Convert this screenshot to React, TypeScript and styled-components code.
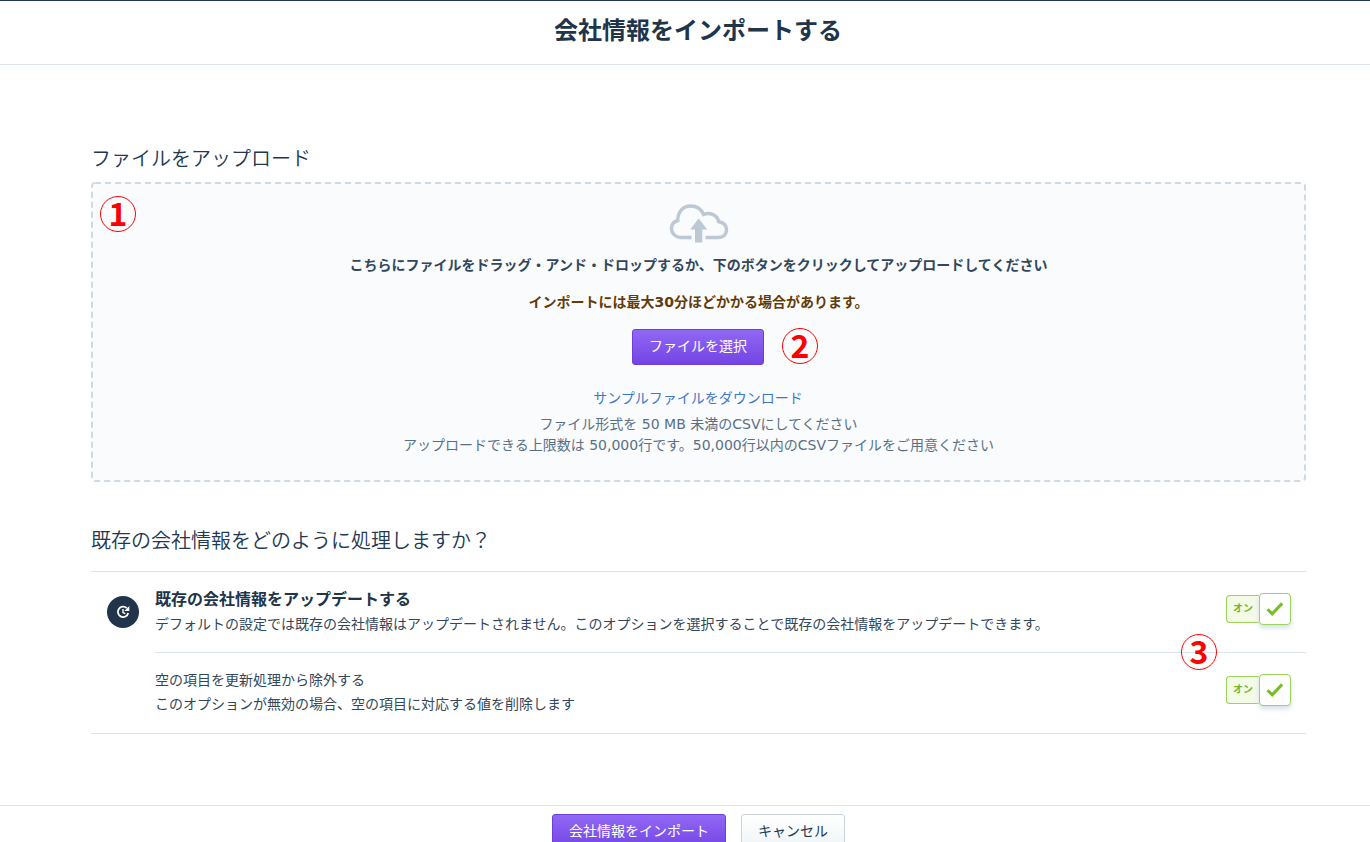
import React from "react";
import styled, { createGlobalStyle } from "styled-components";

const GlobalStyle = createGlobalStyle`
  *, *::before, *::after { box-sizing: border-box; }
  html, body { margin: 0; height: 842px; overflow: hidden; background: #fff; }
  body {
    font-family: "DejaVu Sans", "Noto Sans CJK JP", sans-serif;
    font-size: 14px;
    color: #33475b;
  }
  h1, h2, h3, p { margin: 0; white-space: nowrap; }
`;

const Page = styled.div`
  position: relative;
  height: 842px;
  overflow: hidden;
  display: flex;
  flex-direction: column;
  border-top: 1px solid #22384f;
`;

const Header = styled.header`
  height: 64px;
  flex: none;
  display: flex;
  justify-content: center;
  padding: 10px 0 0 26px;
  border-bottom: 1px solid #dde4ec;
`;

const Title = styled.h1`
  font-size: 24px;
  line-height: 36px;
  font-weight: 700;
  font-family: "Noto Sans CJK JP", sans-serif;
  color: #20344a;
`;

const Main = styled.main`
  flex: none;
  height: 740px;
  padding: 78px 64px 0 91px;
`;

const SectionTitle = styled.h2`
  font-family: "Noto Sans CJK JP", sans-serif;
  font-size: 20px;
  font-weight: 350;
  line-height: 30px;
  color: #22384f;
`;

const DropZone = styled.section`
  position: relative;
  height: 300px;
  margin: 9px 0 43px;
  padding: 22px 0 0 0;
  display: flex;
  flex-direction: column;
  align-items: center;
  background: #fafbfd;
`;

const DashedFrame = styled.svg`
  position: absolute;
  inset: 0;
  width: 100%;
  height: 100%;
  fill: none;
  stroke: #d0dae3;
  stroke-width: 2;
  stroke-dasharray: 6 4;
`;

const CloudIcon = styled.svg`
  display: block;
  width: 60px;
  height: 40px;
`;

const Text = styled.p<{ $color?: string; $bold?: boolean; $top?: number }>`
  font-size: 14px;
  line-height: 21px;
  margin-top: ${(p) => p.$top ?? 0}px;
  font-weight: ${(p) => (p.$bold ? 700 : 400)};
  color: ${(p) => p.$color ?? "#33475b"};
`;

const Button = styled.button<{ $secondary?: boolean; $width: number }>`
  width: ${(p) => p.$width}px;
  height: 36px;
  flex: none;
  padding: 0 0 3px;
  border: 1px solid ${(p) => (p.$secondary ? "#cbd3de" : "#6b40da")};
  border-radius: 3px;
  background: ${(p) =>
    p.$secondary ? "linear-gradient(#ffffff, #eef4f6)" : "linear-gradient(#9168f5, #7444e4)"};
  color: ${(p) => (p.$secondary ? "#22384f" : "#fff")};
  font: 400 14px/21px "Noto Sans CJK JP", sans-serif;
  white-space: nowrap;
`;

const SelectButton = styled(Button)`
  margin: 16px 1px 0 0;
`;

const SampleLink = styled.a`
  margin: 23px 1px 0 0;
  font-size: 14px;
  line-height: 21px;
  color: #3d78c9;
`;

const OptionList = styled.section`
  margin-top: 16px;
  height: 163px;
  border-top: 1px solid #dae3eb;
  border-bottom: 1px solid #dae3eb;
  padding-left: 16px;
  display: flex;
`;

const UpdateBadge = styled.div`
  width: 32px;
  height: 32px;
  margin: 24px 16px 0 0;
  flex: none;
  border-radius: 50%;
  background: #20344a;
  display: grid;
  place-items: center;
`;

const Options = styled.div`
  flex: 1;
`;

const OptionRow = styled.div<{ $divided?: boolean }>`
  height: 81px;
  display: flex;
  justify-content: space-between;
  padding: 14px 15px 0 0;
  border-bottom: ${(p) => (p.$divided ? "1px solid #dae3eb" : "none")};
`;

const OptionTitle = styled.h3`
  font-family: "Noto Sans CJK JP", sans-serif;
  font-size: 16px;
  line-height: 24px;
  font-weight: 700;
  color: #20344a;
`;

const Toggle = styled.div`
  display: flex;
  align-items: center;
  height: 32px;
  margin-top: 7px;
`;

const ToggleLabel = styled.span`
  width: 33px;
  height: 28px;
  border: 1px solid #9bd45a;
  border-right: 0;
  border-radius: 4px 0 0 4px;
  background: #f3fae6;
  font: 700 10px/24px "Noto Sans CJK JP", sans-serif;
  text-align: center;
  color: #73b62b;
`;

const ToggleKnob = styled.span`
  width: 32px;
  height: 32px;
  border: 1px solid #9bd45a;
  border-radius: 4px;
  background: #fff;
  box-shadow: 0 3px 5px #d6dfea;
  display: grid;
  place-items: center;
`;

const Footer = styled.footer`
  flex: none;
  height: 60px;
  display: flex;
  justify-content: center;
  gap: 15px;
  padding: 8px 0 0 27px;
  border-top: 1px solid #dde4ec;
`;

const Marker = styled.span<{ $x: number; $y: number }>`
  position: absolute;
  left: ${(p) => p.$x}px;
  top: ${(p) => p.$y}px;
  width: 36px;
  height: 36px;
  border: 1px solid #f00;
  border-radius: 50%;
  font: 700 32px/30px "Noto Sans CJK JP", sans-serif;
  text-align: center;
  color: #f00;
`;

function OnToggle() {
  return (
    <Toggle>
      <ToggleLabel>オン</ToggleLabel>
      <ToggleKnob>
        <svg width="18" height="16" viewBox="0 0 18 16" fill="none" stroke="#78bd25" strokeWidth="3">
          <path d="M1.5 8.2 6.2 12.8 16.2 2.4" />
        </svg>
      </ToggleKnob>
    </Toggle>
  );
}

export default function App() {
  return (
    <Page>
      <GlobalStyle />
      <Header>
        <Title>会社情報をインポートする</Title>
      </Header>
      <Main>
        <SectionTitle>ファイルをアップロード</SectionTitle>
        <DropZone>
          <DashedFrame>
            <rect x="1" y="1" width="1213" height="298" rx="3" />
          </DashedFrame>
          <CloudIcon viewBox="0 0 60 40">
            <path
              d="M22.500 33.500H12.500C6.500 33.500 2.500 29.500 2.500 24.500C2.500 20.500 5 17.500 8.800 16.500C8.500 8 14 2 21.500 2C28 2 32.500 5.500 34.500 10.500C41 8 48.500 11 49.500 17.500C54.500 18.500 57.500 21.500 57.500 25.800C57.500 30.500 54 33.500 49 33.500H36.500"
              fill="none"
              stroke="#bcc8d3"
              strokeWidth="3.400"
            />
            <path d="M29.700 14.500 38.200 25.500H33.300V38.500H26V25.500H21.200Z" fill="#bcc8d3" />
          </CloudIcon>
          <Text $bold $top={11}>
            こちらにファイルをドラッグ・アンド・ドロップするか、下のボタンをクリックしてアップロードしてください
          </Text>
          <Text $bold $top={16} $color="#633b09">
            インポートには最大30分ほどかかる場合があります。
          </Text>
          <SelectButton $width={132}>ファイルを選択</SelectButton>
          <SampleLink>サンプルファイルをダウンロード</SampleLink>
          <Text $top={5} $color="#587085">
            ファイル形式を 50 MB 未満のCSVにしてください
          </Text>
          <Text $color="#587085">
            アップロードできる上限数は 50,000行です。50,000行以内のCSVファイルをご用意ください
          </Text>
        </DropZone>
        <SectionTitle>既存の会社情報をどのように処理しますか？</SectionTitle>
        <OptionList>
          <UpdateBadge>
            <svg width="14" height="14" viewBox="0 0 14 14" fill="none" stroke="#fff" strokeWidth="1.800">
              <path d="M10.800 3.200A5.200 5.200 0 1 0 12.200 8" />
              <path d="M7 4V7.500L9.300 8.700" strokeWidth="1.400" />
              <path d="M13.300 1V6H8.300Z" fill="#fff" stroke="none" />
            </svg>
          </UpdateBadge>
          <Options>
            <OptionRow $divided>
              <div>
                <OptionTitle>既存の会社情報をアップデートする</OptionTitle>
                <Text $top={4}>
                  デフォルトの設定では既存の会社情報はアップデートされません。このオプションを選択することで既存の会社情報をアップデートできます。
                </Text>
              </div>
              <OnToggle />
            </OptionRow>
            <OptionRow>
              <div>
                <Text $top={3}>空の項目を更新処理から除外する</Text>
                <Text $top={3}>このオプションが無効の場合、空の項目に対応する値を削除します</Text>
              </div>
              <OnToggle />
            </OptionRow>
          </Options>
        </OptionList>
      </Main>
      <Footer>
        <Button $width={174}>会社情報をインポート</Button>
        <Button $secondary $width={104}>キャンセル</Button>
      </Footer>
      <Marker $x={100} $y={195}>1</Marker>
      <Marker $x={782} $y={327}>2</Marker>
      <Marker $x={1181} $y={633}>3</Marker>
    </Page>
  );
}
